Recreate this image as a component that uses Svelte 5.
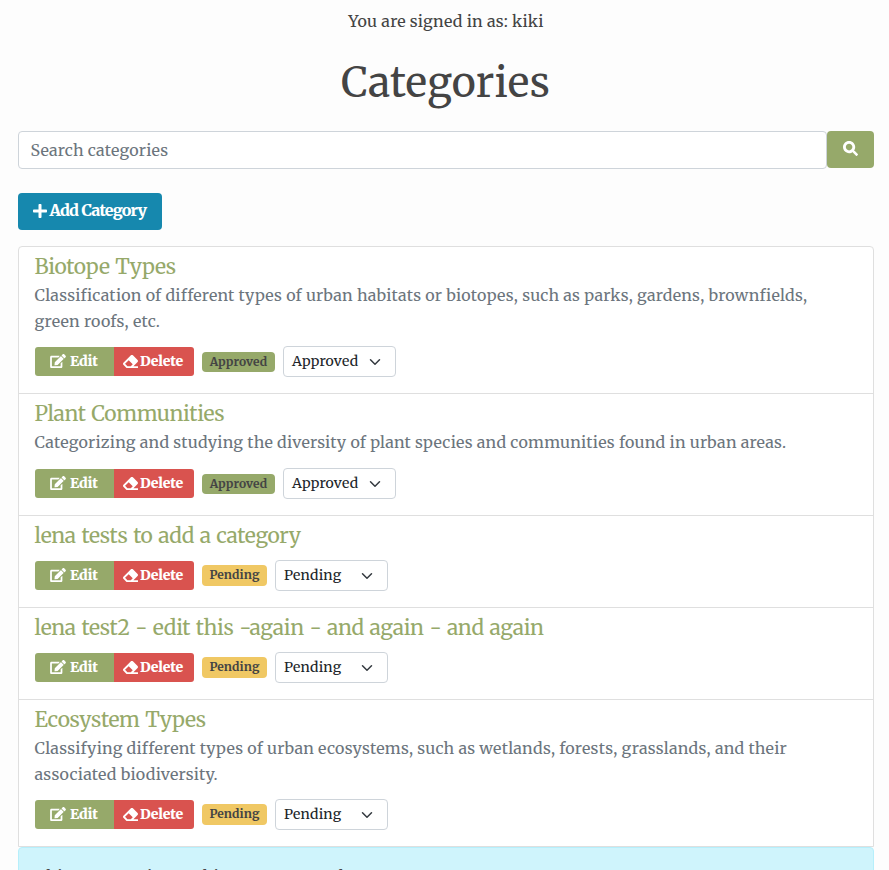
<script>
  const categories = [
    { name: 'Biotope Types', lines: ['Classification of different types of urban habitats or biotopes, such as parks, gardens, brownfields,', 'green roofs, etc.'], status: 'Approved' },
    { name: 'Plant Communities', lines: ['Categorizing and studying the diversity of plant species and communities found in urban areas.'], status: 'Approved' },
    { name: 'lena tests to add a category', lines: [], status: 'Pending' },
    { name: 'lena test2 - edit this -again - and again - and again', lines: [], status: 'Pending' },
    { name: 'Ecosystem Types', lines: ['Classifying different types of urban ecosystems, such as wetlands, forests, grasslands, and their', 'associated biodiversity.'], status: 'Pending' }
  ];
</script>

<main>
  <p class="signed"><span>You are signed in as: kiki</span></p>
  <h1><span>Categories</span></h1>

  <form class="search">
    <div class="field"><span>Search categories</span></div>
    <button type="button" class="go" aria-label="Search">
      <svg viewBox="0 0 512 512" width="15" height="15"><path d="M505 442.700 405.300 343c-4.500-4.500-10.600-7-17-7H372c27.600-35.300 44-79.700 44-128C416 93.100 322.900 0 208 0S0 93.100 0 208s93.100 208 208 208c48.300 0 92.700-16.400 128-44v16.300c0 6.400 2.500 12.500 7 17l99.700 99.700c9.400 9.400 24.600 9.400 33.900 0l28.300-28.300c9.400-9.400 9.400-24.600.1-34zM208 320c-61.900 0-112-50.100-112-112S146.100 96 208 96s112 50.100 112 112-50.100 112-112 112z" /></svg>
    </button>
  </form>

  <button type="button" class="add">
    <svg viewBox="0 0 448 512" width="14" height="16"><path d="M416 208H272V64c0-17.700-14.300-32-32-32h-32c-17.700 0-32 14.300-32 32v144H32c-17.700 0-32 14.300-32 32v32c0 17.700 14.300 32 32 32h144v144c0 17.700 14.300 32 32 32h32c17.700 0 32-14.300 32-32V304h144c17.700 0 32-14.300 32-32v-32c0-17.700-14.300-32-32-32z" /></svg>
    <span>Add Category</span>
  </button>

  <ul>
    {#each categories as c}
      <li class="lines-{c.lines.length}">
        <h2><span>{c.name}</span></h2>
        {#if c.lines.length}
          <p class="desc">{#each c.lines as line}<span>{line}</span>{/each}</p>
        {/if}
        <div class="actions">
          <button type="button" class="edit">
            <svg viewBox="0 0 576 512" width="16" height="14"><path d="M402.600 83.200l90.200 90.200c3.800 3.800 3.800 10 0 13.800L274.400 405.600l-92.800 10.300c-12.400 1.400-22.900-9.100-21.500-21.500l10.300-92.800L388.800 83.200c3.800-3.800 10-3.800 13.800 0zm162-22.900l-48.800-48.800c-15.200-15.200-39.900-15.200-55.200 0l-35.400 35.400c-3.800 3.800-3.800 10 0 13.800l90.200 90.200c3.800 3.800 10 3.800 13.800 0l35.400-35.400c15.200-15.300 15.200-40 0-55.200zM384 346.200V448H64V128h229.800c3.200 0 6.200-1.300 8.500-3.500l40-40c7.600-7.600 2.200-20.500-8.500-20.500H48C21.500 64 0 85.500 0 112v352c0 26.500 21.500 48 48 48h352c26.500 0 48-21.500 48-48V306.200c0-10.700-12.900-16-20.500-8.500l-40 40c-2.200 2.300-3.500 5.300-3.500 8.500z" /></svg>
            <span>Edit</span>
          </button>
          <button type="button" class="delete">
            <svg viewBox="0 0 512 512" width="15" height="15"><path d="M497.900 273.900c18.800-18.700 18.800-49.100 0-67.900l-160-160c-18.700-18.700-49.100-18.700-67.900 0l-256 256c-18.700 18.700-18.700 49.100 0 67.900l96 96A48 48 0 0 0 144 480h356c6.600 0 12-5.400 12-12v-40c0-6.600-5.400-12-12-12H355.900l142-142.100zM195.300 211.300l137.400 137.400L265.400 416H150.600l-80-80 124.700-124.700z" /></svg>
            <span>Delete</span>
          </button>
          <span class="badge {c.status.toLowerCase()}"><span>{c.status}</span></span>
          <div class="select" role="combobox" aria-expanded="false" aria-controls="status" tabindex="0">
            <span>{c.status}</span>
            <svg viewBox="0 0 16 16" width="12" height="12"><path d="M2 5l6 6 6-6" /></svg>
          </div>
        </div>
      </li>
    {/each}
  </ul>
  <div class="alert"><span>This message is now his to manage as he</span></div>
</main>

<style>
  :global(body) { background: #fdfdfd; overflow: hidden; }
  main { box-sizing: border-box; height: 870px; overflow: hidden; padding: 0 15px 0 18px; font: 16px/26px Merriweather, 'DejaVu Serif Condensed', 'DejaVu Serif', serif; letter-spacing: 0.23px; color: #444; }
  p, h1, h2, ul { margin: 0; padding: 0; font-weight: 400; }
  button { font: inherit; border: 0; padding: 0; color: #fff; font-weight: 700; display: flex; align-items: center; white-space: nowrap; }
  span { white-space: nowrap; }
  svg { fill: currentColor; flex: none; display: block; }
  .signed { text-align: center; padding-top: 8px; }
  h1 { text-align: center; font-size: 41px; line-height: 48px; margin-top: 25px; letter-spacing: 0.2px; }
  h1 span { margin-right: 1px; }
  .search { display: flex; margin-top: 24px; height: 38px; }
  .field { box-sizing: border-box; flex: 1; height: 38px; border: 1px solid #ced4da; border-radius: 4px; background: #fff; padding: 5px 11.5px; color: #6c757d; }
  .go { width: 47px; height: 37px; border-radius: 4px; background: #96a96a; justify-content: center; padding: 0 1px 2px 0; box-sizing: border-box; }
  .add { box-sizing: border-box; width: 144px; height: 37px; margin-top: 24px; border-radius: 4px; background: #1688ae; padding: 0 0 3px 15px; gap: 2.5px; font-weight: 800; letter-spacing: -0.85px; word-spacing: 0.5px; }
  .add svg { margin-top: 1px; }
  ul { list-style: none; margin-top: 16px; border: 1px solid #dfdfdf; border-radius: 4px 4px 0 0; background: #fff; height: 599px; }
  li { box-sizing: border-box; padding: 5px 16px 0 15.5px; height: 92px; border-bottom: 1px solid #dfdfdf; display: flex; flex-direction: column; }
  li:last-child { border-bottom: 0; }
  .lines-1 { height: 122px; }
  .lines-2 { height: 147px; }
  h2 { font-size: 21px; line-height: 30px; color: #96a96a; letter-spacing: -0.35px; word-spacing: 1.1px; }
  .desc { color: #6c757d; margin-top: 0; }
  .desc span { display: block; }
  .actions { display: flex; align-items: center; margin: auto 0 16px 0.5px; height: 31px; font-size: 14px; letter-spacing: 0; }
  li:last-child .actions { margin-bottom: 17px; }
  .edit, .delete { box-sizing: border-box; height: 29px; padding-bottom: 2px; font-weight: 900; letter-spacing: -0.2px; }
  .edit svg, .delete svg { margin-top: 1px; }
  .edit { width: 79px; gap: 4px; padding-left: 15px; border-radius: 3px 0 0 3px; background: #96a96a; }
  .delete { width: 80px; padding-left: 8.5px; gap: 2.5px; border-radius: 0 3px 3px 0; background: #d9534f; }
  .badge { box-sizing: border-box; margin: 1px 0 0 8px; width: 73px; height: 20px; border-radius: 4px; background: #96a96a; font-size: 12px; line-height: 19px; font-weight: 700; text-align: center; letter-spacing: 0.1px; }
  .pending { width: 65px; background: #f0c864; height: 21px; margin-top: 0; line-height: 20px; }
  .select { box-sizing: border-box; margin-left: 8px; width: 113px; height: 31px; border: 1px solid #ced4da; border-radius: 4px; background: #fff; color: #212529; padding: 0 14px 0 8px; display: flex; align-items: center; justify-content: space-between; letter-spacing: 0.2px; }
  .select span { margin-top: -2px; }
  .select svg { fill: none; stroke: #343a40; stroke-width: 2; stroke-linecap: round; stroke-linejoin: round; margin-top: 1px; }
  .alert { box-sizing: border-box; height: 60px; border: 1px solid #b6effb; border-radius: 4px; background: #cff4fc; padding: 15px 16px; color: #444; }
</style>
